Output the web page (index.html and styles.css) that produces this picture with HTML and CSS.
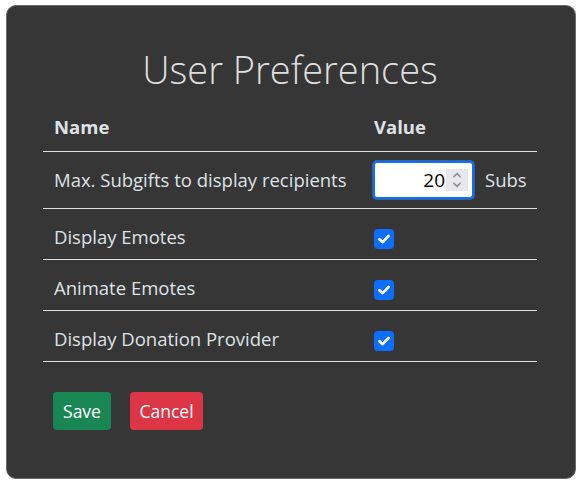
FILE: index.html
```html
<!DOCTYPE html>
<html>
<head>
<meta charset="utf-8">
<link rel="stylesheet" href="styles.css">
</head>
<body>
<div class="card">
  <h1 class="title">User Preferences</h1>
  <table class="prefs">
    <thead>
      <tr><th class="col-name">Name</th><th class="col-value">Value</th></tr>
    </thead>
    <tbody>
      <tr class="row-input">
        <td>Max. Subgifts to display recipients</td>
        <td>
          <div class="value-line">
            <div class="num">
              <span class="num-text">20</span>
              <span class="spin">
                <svg viewBox="0 0 22 22" width="22" height="22"><path d="M7.3 8.2 L11 4.6 L14.7 8.2" fill="none" stroke="#8e8e96" stroke-width="1.5"/><path d="M7.3 13.8 L11 17.4 L14.7 13.8" fill="none" stroke="#8e8e96" stroke-width="1.5"/></svg>
              </span>
            </div>
            <span class="unit">Subs</span>
          </div>
        </td>
      </tr>
      <tr>
        <td>Display Emotes</td>
        <td><span class="check"><svg viewBox="0 0 20 20" width="20" height="20"><path d="M5.5 10.2 L8.6 13.2 L14.6 7" fill="none" stroke="#fff" stroke-width="2.6" stroke-linecap="round" stroke-linejoin="round"/></svg></span></td>
      </tr>
      <tr>
        <td>Animate Emotes</td>
        <td><span class="check"><svg viewBox="0 0 20 20" width="20" height="20"><path d="M5.5 10.2 L8.6 13.2 L14.6 7" fill="none" stroke="#fff" stroke-width="2.6" stroke-linecap="round" stroke-linejoin="round"/></svg></span></td>
      </tr>
      <tr>
        <td>Display Donation Provider</td>
        <td><span class="check"><svg viewBox="0 0 20 20" width="20" height="20"><path d="M5.5 10.2 L8.6 13.2 L14.6 7" fill="none" stroke="#fff" stroke-width="2.6" stroke-linecap="round" stroke-linejoin="round"/></svg></span></td>
      </tr>
    </tbody>
  </table>
  <div class="actions">
    <button class="btn btn-save">Save</button>
    <button class="btn btn-cancel">Cancel</button>
  </div>
</div>
</body>
</html>
```
FILE: styles.css
```css
* { box-sizing: border-box; }
html, body { margin: 0; padding: 0; background: #ffffff; }
body { font-family: "Open Sans", "Noto Sans", sans-serif; color: #dee2e6; }
.card {
  margin: 5px 6px;
  width: 570px;
  height: 474px;
  background: #363636;
  border: 1px solid #6a6a6a;
  border-radius: 10px;
  padding: 39px 38px 0 36px;
}
.title {
  margin: 0 0 10px 0;
  text-align: center;
  font-weight: 300;
  font-size: 38px;
  line-height: 48px;
  color: #dedede;
}
.prefs {
  width: 494px;
  border-collapse: collapse;
  table-layout: fixed;
  font-size: 18.5px;
}
.prefs th {
  text-align: left;
  font-weight: 700;
  padding: 0 11px;
  height: 48px;
  border-bottom: 1px solid #dee2e6;
}
.col-name { width: 320px; }
.col-value { width: 174px; }
.prefs td {
  padding: 6px 11px 0 11px;
  height: 51px;
  border-bottom: 1px solid #dee2e6;
  vertical-align: middle;
  white-space: nowrap;
}
.prefs .row-input td { height: 57px; padding: 0 11px; }
.value-line { display: flex; align-items: center; gap: 11px; margin-left: -1px; }
.num {
  width: 101px;
  height: 38px;
  border: 2px solid #0d6efd;
  border-radius: 4px;
  box-shadow: 0 0 0 1px #3c5e95;
  background: #fff;
  color: #000;
  display: flex;
  align-items: center;
  justify-content: flex-end;
  padding: 0 4px 0 6px;
  flex: none;
}
.num-text { font-size: 19px; line-height: 22px; }
.spin {
  display: flex;
  width: 22px;
  height: 22px;
  background: #e8e8ec;
  margin-left: 1px;
}
.unit { font-size: 18.5px; }
.check {
  display: inline-flex;
  width: 20px;
  height: 20px;
  background: #0d6efd;
  border-radius: 4px;
  vertical-align: middle;
}
.actions {
  display: flex;
  gap: 19px;
  padding: 30px 0 0 10px;
}
.btn {
  font-family: "Open Sans", sans-serif;
  font-size: 17.5px;
  color: #fff;
  border: none;
  border-radius: 4px;
  height: 38px;
  padding: 0;
}
.btn-save { background: #198754; width: 58px; }
.btn-cancel { background: #dc3545; width: 73px; }
```
